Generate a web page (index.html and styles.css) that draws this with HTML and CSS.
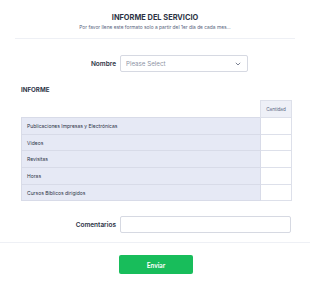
FILE: index.html
```html
<!DOCTYPE html>
<html lang="es">
<head>
<meta charset="utf-8">
<link rel="stylesheet" href="styles.css">
</head>
<body>
<div class="form">
  <header class="head">
    <h1 class="title">INFORME DEL SERVICIO</h1>
    <p class="sub">Por favor llene este formato solo a partir del 1er día de cada mes...</p>
  </header>
  <div class="row row-name">
    <label class="lbl">Nombre</label>
    <div class="select">
      <span class="ph">Please Select</span>
      <svg class="chev" width="6" height="4" viewBox="0 0 6 4"><path d="M0.8 0.8 L3 3 L5.2 0.8" fill="none" stroke="#6f7689" stroke-width="0.9"/></svg>
    </div>
  </div>
  <h2 class="section">INFORME</h2>
  <table class="grid">
    <thead>
      <tr><th class="blank"></th><th class="col">Cantidad</th></tr>
    </thead>
    <tbody>
      <tr><td class="rh">Publicaciones Impresas y Electrónicas</td><td class="cell"></td></tr>
      <tr><td class="rh">Videos</td><td class="cell"></td></tr>
      <tr><td class="rh">Revisitas</td><td class="cell"></td></tr>
      <tr><td class="rh">Horas</td><td class="cell"></td></tr>
      <tr><td class="rh">Cursos Bíblicos dirigidos</td><td class="cell"></td></tr>
    </tbody>
  </table>
  <div class="row row-com">
    <label class="lbl">Comentarios</label>
    <div class="input"></div>
  </div>
  <div class="foot">
    <button class="btn">Enviar</button>
  </div>
</div>
</body>
</html>
```
FILE: styles.css
```css
* { box-sizing: border-box; }
html, body { margin: 0; padding: 0; background: #fff; }
body { font-family: Inter, "Noto Sans", sans-serif; color: #2c3345; width: 310px; height: 292px; overflow: hidden; }
.form { width: 310px; }
.head { margin: 0 15px; padding-top: 12px; height: 39px; border-bottom: 1px solid #eef0f5; text-align: center; }
.title { margin: 0; font-size: 7.4px; line-height: 11px; font-weight: 700; color: #2c3345; letter-spacing: 0; }
.sub { margin: 1px 0 0; font-size: 4.85px; line-height: 7px; color: #57647e; }
.row { display: grid; grid-template-columns: 116px 1fr; column-gap: 4px; align-items: center; }
.row-name { margin-top: 16px; }
.lbl { text-align: right; font-size: 6.5px; line-height: 8px; font-weight: 600; color: #2c3345; }
.select { width: 128px; height: 17px; border: 1px solid #d6d9e2; border-radius: 2px; display: flex; align-items: center; justify-content: space-between; padding: 0 6px 0 5px; }
.ph { font-size: 6.2px; color: #8d93a5; }
.chev { display: block; }
.section { margin: 13px 0 0 21px; font-size: 6.2px; line-height: 9px; font-weight: 700; color: #2c3345; }
.grid { margin: 6px 0 0 21px; width: 270px; border-collapse: collapse; table-layout: fixed; }
.grid th, .grid td { padding: 0; }
.grid th { height: 17px; }
.grid th.blank { width: 239px; background: transparent; border: none; }
.grid th.col { width: 31px; background: #eef0f7; border: 1px solid #dde0ea; font-size: 4.6px; font-weight: 400; color: #57647e; text-align: center; }
.grid td { height: 16.7px; }
.grid td.rh { background: #e6e9f5; border: 1px solid #d8dbe8; font-size: 5px; line-height: 6px; color: #2c3345; padding-left: 5px; text-align: left; }
.grid td.cell { background: #fff; border: 1px solid #dde0ea; }
.row-com { margin-top: 15px; }
.input { width: 171px; height: 17px; border: 1px solid #d6d9e2; border-radius: 2px; }
.foot { margin-top: 9px; border-top: 1px solid #eef0f5; padding-top: 12px; padding-left: 119px; }
.btn { display: block; width: 74px; height: 19px; background: #18bd5b; border: none; border-radius: 2px; color: #fff; font-family: Lato, "Noto Sans", sans-serif; font-size: 6.6px; font-weight: 700; padding: 0; }
```
